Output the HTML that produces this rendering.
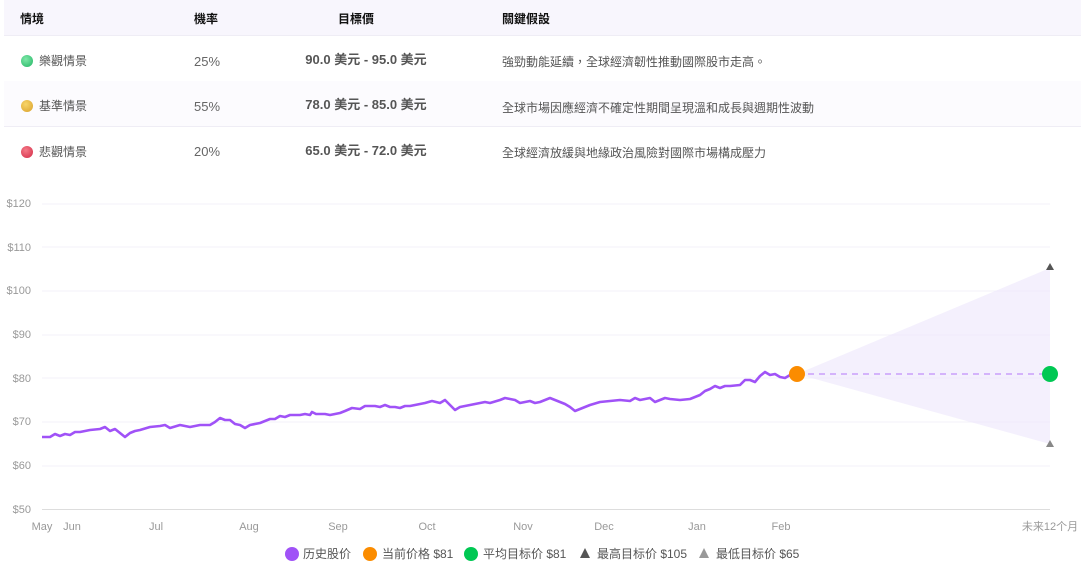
<!DOCTYPE html><html><head><meta charset="utf-8"><style>
body{margin:0;width:1083px;height:562px;background:#fff;font-family:"Liberation Sans","Noto Sans CJK TC",sans-serif;position:relative;overflow:hidden}
.t{position:absolute;left:4px;width:1077px}
.r{position:absolute;left:0;width:1077px;border-bottom:1px solid #efedf5}
.c{position:absolute;font-size:12px;color:#555;white-space:nowrap}
.h{font-size:12px;color:#111;font-weight:bold}
.p{width:200px;text-align:center;left:262px;font-weight:bold;color:#555;font-size:13px}
.dot{display:inline-block;width:12px;height:12px;border-radius:50%;vertical-align:-2px;margin-right:6px}
</style></head><body>
<div class="t">
<div class="r" style="top:0;height:35px;background:#f8f6fd">
<span class="c h" style="left:16px;top:10px">情境</span>
<span class="c h" style="left:190px;top:10px">機率</span>
<span class="c h" style="left:334px;top:10px">目標價</span>
<span class="c h" style="left:498px;top:10px">關鍵假設</span></div>
<div class="r" style="top:35px;height:46px">
<span class="c" style="left:17px;top:17px"><span class="dot" style="background:radial-gradient(circle at 40% 35%,#7ee8a8,#22b464)"></span>樂觀情景</span>
<span class="c" style="left:190px;top:19px;color:#666;font-size:13px">25%</span>
<span class="c p" style="top:14px">90.0 美元 - 95.0 美元</span>
<span class="c" style="left:498px;top:18px">強勁動能延續，全球經濟韌性推動國際股市走高。</span></div>
<div class="r" style="top:81px;height:45px;background:#fcfbfe">
<span class="c" style="left:17px;top:16px"><span class="dot" style="background:radial-gradient(circle at 40% 35%,#f7d56a,#d9a02a)"></span>基準情景</span>
<span class="c" style="left:190px;top:18px;color:#666;font-size:13px">55%</span>
<span class="c p" style="top:13px">78.0 美元 - 85.0 美元</span>
<span class="c" style="left:498px;top:18px">全球市場因應經濟不確定性期間呈現溫和成長與週期性波動</span></div>
<div class="r" style="top:126px;height:46px;border:none">
<span class="c" style="left:17px;top:17px"><span class="dot" style="background:radial-gradient(circle at 40% 35%,#f57a88,#d22a45)"></span>悲觀情景</span>
<span class="c" style="left:190px;top:18px;color:#666;font-size:13px">20%</span>
<span class="c p" style="top:14px">65.0 美元 - 72.0 美元</span>
<span class="c" style="left:498px;top:18px">全球經濟放緩與地緣政治風險對國際市場構成壓力</span></div>
</div>
<svg width="1083" height="562" style="position:absolute;left:0;top:0" font-family="Liberation Sans,Noto Sans CJK SC,sans-serif">
<g stroke="#f3f1fa" stroke-width="1">
<line x1="42" y1="204" x2="1050" y2="204"/><line x1="42" y1="247" x2="1050" y2="247"/><line x1="42" y1="291" x2="1050" y2="291"/><line x1="42" y1="335" x2="1050" y2="335"/><line x1="42" y1="378" x2="1050" y2="378"/><line x1="42" y1="422" x2="1050" y2="422"/><line x1="42" y1="466" x2="1050" y2="466"/></g>
<line x1="42" y1="509.5" x2="1050" y2="509.5" stroke="#ddd"/>
<g font-size="11" fill="#999" text-anchor="end">
<text x="31" y="207">$120</text><text x="31" y="251">$110</text><text x="31" y="294">$100</text><text x="31" y="338">$90</text><text x="31" y="382">$80</text><text x="31" y="425">$70</text><text x="31" y="469">$60</text><text x="31" y="513">$50</text></g>
<g font-size="11" fill="#999" text-anchor="middle">
<text x="42" y="530">May</text><text x="72" y="530">Jun</text><text x="156" y="530">Jul</text><text x="249" y="530">Aug</text><text x="338" y="530">Sep</text><text x="427" y="530">Oct</text><text x="523" y="530">Nov</text><text x="604" y="530">Dec</text><text x="697" y="530">Jan</text><text x="781" y="530">Feb</text><text x="1050" y="530">未来12个月</text></g>
<polygon points="797,374 1050,268 1050,444" fill="#ede6fb" opacity="0.6"/>
<line x1="797" y1="374" x2="1050" y2="374" stroke="#d4b3fb" stroke-width="2" stroke-dasharray="6,5"/>
<polyline fill="none" stroke="#a052f7" stroke-width="2.6" stroke-linejoin="round" points="42,437 50,437 55,434 60,436 65,434 70,435 75,432 80,432 90,430 100,429 105,427 110,431 115,429 120,433 125,437 130,433 135,431 140,430 150,427 160,426 165,425 170,428 180,425 190,427 200,425 210,425 215,422 220,418 225,420 230,420 235,424 240,425 245,428 250,425 260,423 265,421 270,419 275,419 280,416 285,417 290,415 300,415 305,414 310,415 312,412 316,414 325,414 330,415 340,413 345,411 352,408 360,409 365,406 370,406 375,406 380,407 385,405 390,407 395,407 400,408 405,406 410,406 415,405 420,404 425,403 432,401 440,403 445,400 455,410 460,407 470,405 480,403 485,402 490,403 500,400 505,398 510,399 515,400 520,403 525,402 530,401 535,403 540,402 545,400 550,398 555,400 560,402 565,404 570,407 575,411 580,409 590,405 600,402 610,401 620,400 630,401 635,398 640,400 645,399 650,398 655,402 660,400 665,398 670,399 680,400 690,399 695,397 700,395 705,391 710,389 715,386 720,388 725,386 730,386 740,385 745,380 750,380 755,382 760,376 765,372 770,375 775,374 780,377 785,378 790,375 795,376 797,374"/>
<circle cx="797" cy="374" r="8" fill="#fb8c00"/>
<circle cx="1050" cy="374" r="8" fill="#00c853"/>
<polygon points="1050,263 1054,270 1046,270" fill="#555"/>
<polygon points="1050,440 1054,447 1046,447" fill="#888"/>
<g font-size="12" fill="#555">
<circle cx="292" cy="554" r="7" fill="#a052f7"/><text x="303" y="558">历史股价</text>
<circle cx="370" cy="554" r="7" fill="#fb8c00"/><text x="382" y="558">当前价格 $81</text>
<circle cx="471" cy="554" r="7" fill="#00c853"/><text x="483" y="558">平均目标价 $81</text>
<polygon points="585,548 590,558 580,558" fill="#555"/><text x="597" y="558">最高目标价 $105</text>
<polygon points="704,548 709,558 699,558" fill="#999"/><text x="716" y="558">最低目标价 $65</text></g>
</svg>
</body></html>
